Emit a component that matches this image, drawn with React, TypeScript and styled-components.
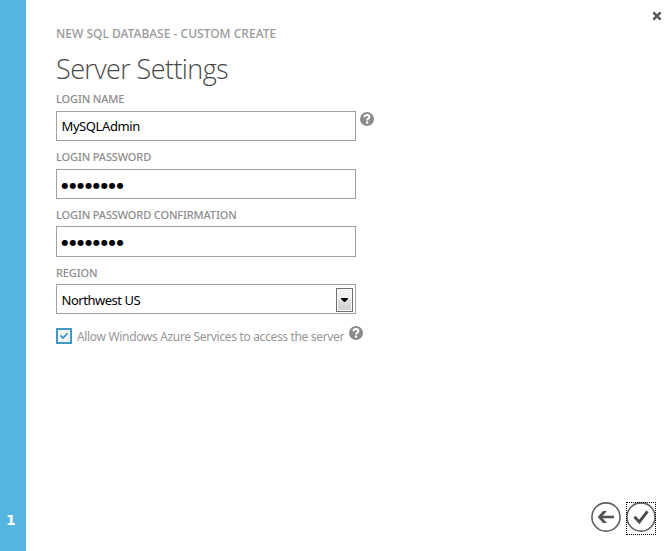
import React from "react";
import styled, { createGlobalStyle } from "styled-components";

const GlobalStyle = createGlobalStyle`
  * { box-sizing: border-box; }
  body { margin: 0; background: #fff; overflow: hidden; }
  svg { display: block; flex: none; }
`;

const Dialog = styled.div`
  display: flex;
  width: 670px;
  height: 551px;
  background: #fff;
  font-family: "Noto Sans", "Open Sans", sans-serif;
`;

const StepRail = styled.aside`
  display: flex;
  flex-direction: column;
  justify-content: flex-end;
  width: 26px;
  padding: 0 0 21px 6px;
  background: #54b5e0;
  color: #fff;
  font: bold 14px/20px "DejaVu Sans", sans-serif;
`;

const Content = styled.main`
  flex: 1;
  padding: 24px 0 0 30px;
`;

const Side = styled.div`
  display: flex;
  flex-direction: column;
  justify-content: space-between;
  align-items: flex-end;
  width: 90px;
  padding: 11px 8px 16px 0;
`;

const Fit = styled.span<{ $ls?: number }>`
  letter-spacing: ${(p) => p.$ls ?? 0}px;
  white-space: nowrap;
`;

const Breadcrumb = styled.div`
  height: 20px;
  color: #999;
  font-size: 12px;
  line-height: 20px;
  font-weight: 500;
`;

const Title = styled.h1`
  height: 48px;
  margin: 0;
  color: #484848;
  font-family: "Open Sans", "Noto Sans", sans-serif;
  font-size: 27px;
  line-height: 49px;
  font-weight: 300;
`;

const Field = styled.div`
  height: 58px;
`;

const Label = styled.label<{ $gap?: number }>`
  display: block;
  height: ${(p) => p.$gap ?? 19}px;
  color: #8c8c8c;
  font-size: 11px;
  line-height: 14px;
  font-weight: 500;
`;

const Row = styled.div`
  display: flex;
  align-items: flex-start;
  gap: 4px;
`;

const Box = styled.div<{ $h?: number; $drop?: number }>`
  display: flex;
  align-items: center;
  justify-content: space-between;
  width: 300px;
  height: ${(p) => p.$h ?? 30}px;
  padding: ${(p) => p.$drop ?? 0}px 2px ${(p) => 1 - (p.$drop ?? 0)}px 4.5px;
  border: 1px solid #a0a0a0;
  color: #000;
  font-size: 13px;
  line-height: 20px;
`;

const Dots = styled.span`
  padding-top: 4px;
  font: 8px/14px "DejaVu Sans", sans-serif;
  letter-spacing: 0.9px;
`;

const DropButton = styled.button`
  display: flex;
  align-items: center;
  justify-content: center;
  width: 17px;
  height: 24px;
  padding: 0;
  border: 1px solid #707070;
  background: linear-gradient(#f2f2f2 0%, #ebebeb 50%, #dddddd 50%, #cfcfcf 100%);
  box-shadow: inset 0 0 0 1px #fafafa;
`;

const HelpSlot = styled.span`
  padding-top: 1px;
`;

const CheckRow = styled.div`
  display: flex;
  align-items: flex-start;
  height: 20px;
  margin-top: 2px;
`;

const CheckBox = styled.span`
  display: flex;
  width: 16px;
  height: 16px;
  margin-top: 2px;
  border: 2px solid #4398c4;
  background: #f3f3f3;
`;

const CheckText = styled.span`
  width: 277px;
  padding: 2px 0 0 5px;
  color: #969696;
  font-size: 12px;
  line-height: 17px;
`;

const Actions = styled.div`
  display: flex;
  gap: 5px;
  margin-right: 6px;
`;

const RoundButton = styled.button<{ $focused?: boolean }>`
  width: 30px;
  height: 33px;
  padding: 0;
  border: 0;
  background: none;
  outline: ${(p) => (p.$focused ? "1px dotted #000" : "none")};
  outline-offset: -1px;
`;

const HelpIcon = () => (
  <svg width="14" height="14" viewBox="0 0 14 14">
    <circle cx="7" cy="7" r="7" fill="#8b8b8b" />
    <path d="M4.5 5.2C4.6 3.7 5.7 3.1 7 3.1c1.4 0 2.4.7 2.4 1.9C9.4 6.6 7.1 6.5 7.1 8.5" fill="none" stroke="#fff" strokeWidth="2" />
    <rect x="6" y="9.5" width="2.2" height="2.1" fill="#fff" />
  </svg>
);

const CloseIcon = () => (
  <svg width="10" height="10" viewBox="0 0 10 10">
    <path d="M1.4 1.4L8.6 8.6M8.6 1.4L1.4 8.6" stroke="#5b5b5b" strokeWidth="2.6" />
  </svg>
);

const App = () => (
  <>
    <GlobalStyle />
    <Dialog>
      <StepRail>1</StepRail>
      <Content>
        <Breadcrumb><Fit $ls={0.01}>NEW SQL DATABASE - CUSTOM CREATE</Fit></Breadcrumb>
        <Title><Fit $ls={-0.6}>Server Settings</Fit></Title>
        <Field>
          <Label><Fit $ls={-0.13}>LOGIN NAME</Fit></Label>
          <Row>
            <Box><Fit $ls={-0.4}>MySQLAdmin</Fit></Box>
            <HelpSlot><HelpIcon /></HelpSlot>
          </Row>
        </Field>
        <Field>
          <Label><Fit $ls={-0.13}>LOGIN PASSWORD</Fit></Label>
          <Box><Dots>●●●●●●●●</Dots></Box>
        </Field>
        <Field>
          <Label $gap={18}><Fit $ls={-0.13}>LOGIN PASSWORD CONFIRMATION</Fit></Label>
          <Box $h={31}><Dots>●●●●●●●●</Dots></Box>
        </Field>
        <Field>
          <Label $gap={18}><Fit $ls={-0.13}>REGION</Fit></Label>
          <Box $drop={1}>
            <Fit $ls={-0.48}>Northwest US</Fit>
            <DropButton aria-label="Open region list">
              <svg width="7" height="4" viewBox="0 0 7 4"><path d="M0 0h7v1L4 4H3L0 1z" fill="#000" /></svg>
            </DropButton>
          </Box>
        </Field>
        <CheckRow>
          <CheckBox>
            <svg width="12" height="12" viewBox="0 0 12 12">
              <path d="M2.5 5.4L5 8L9.6 3.2" fill="none" stroke="#2f8fc0" strokeWidth="1.6" />
            </svg>
          </CheckBox>
          <CheckText><Fit $ls={-0.33}>Allow Windows Azure Services to access the server</Fit></CheckText>
          <HelpIcon />
        </CheckRow>
      </Content>
      <Side>
        <CloseIcon />
        <Actions>
          <RoundButton aria-label="Back">
            <svg width="30" height="33" viewBox="0 0 30 33">
              <circle cx="15" cy="15" r="14.1" fill="none" stroke="#606060" strokeWidth="1.6" />
              <path d="M9 15H23" stroke="#555" strokeWidth="2.6" />
              <path d="M12 9H16L10.5 15L16 21H12L6.7 15z" fill="#555" />
            </svg>
          </RoundButton>
          <RoundButton $focused aria-label="Finish">
            <svg width="30" height="33" viewBox="0 0 30 33">
              <circle cx="15" cy="15" r="14.1" fill="none" stroke="#606060" strokeWidth="1.6" />
              <path d="M8.5 14.8L13.3 20L21.5 9.3" fill="none" stroke="#4c4c4c" strokeWidth="2.9" />
            </svg>
          </RoundButton>
        </Actions>
      </Side>
    </Dialog>
  </>
);

export default App;
